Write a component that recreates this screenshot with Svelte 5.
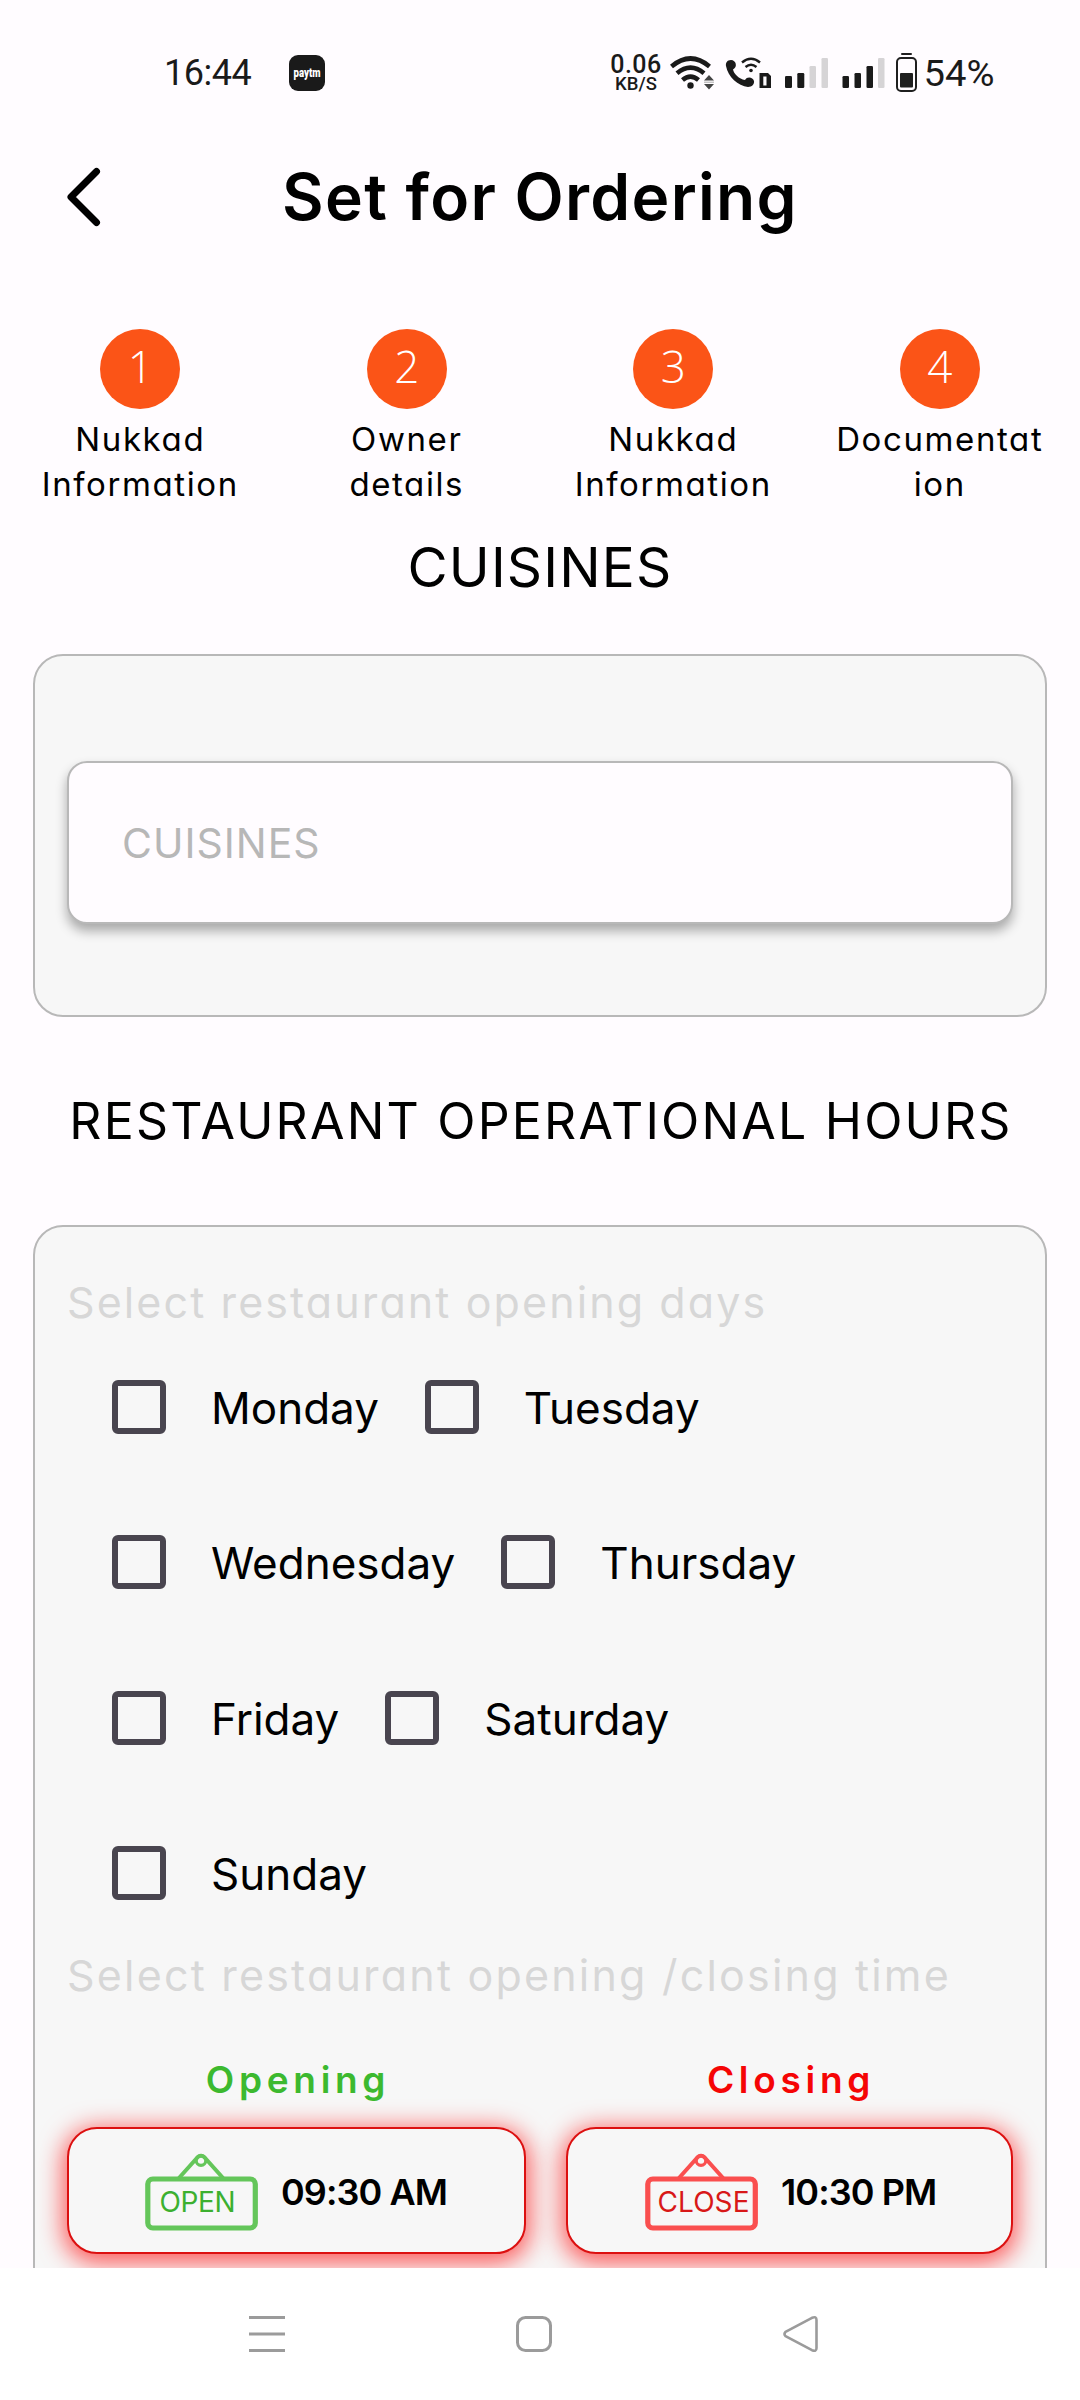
<script>
  const steps = [
    { n: 1, lines: ['Nukkad', 'Information'] },
    { n: 2, lines: ['Owner', 'details'] },
    { n: 3, lines: ['Nukkad', 'Information'] },
    { n: 4, lines: ['Documentat', 'ion'] }
  ];
  const dayRows = [['Monday', 'Tuesday'], ['Wednesday', 'Thursday'], ['Friday', 'Saturday'], ['Sunday']];
  const slots = [
    { kind: 'open', title: 'Opening', sign: 'OPEN', x: 14.5, len: 76, time: '09:30 AM' },
    { kind: 'close', title: 'Closing', sign: 'CLOSE', x: 12.5, len: 92, time: '10:30 PM' }
  ];
</script>

<div class="screen">
  <div class="status">
    <span class="clock">16:44</span>
    <span class="paytm"><svg width="36" height="36"><text x="4.5" y="22" textLength="27" lengthAdjust="spacingAndGlyphs">paytm</text></svg></span>
    <div class="speed"><span class="rate">0.06</span><span class="unit">KB/S</span></div>
    <svg class="icons" width="310" height="48" viewBox="668 48 310 48">
      <g fill="none" stroke="#1a1a1a">
        <path d="M671.5 65.5Q690.5 49.5 709.5 65.5" stroke-width="4.6" />
        <path d="M677 72.3Q690.5 61 704 72.3" stroke-width="4.6" />
        <path d="M682.5 79Q690.5 72.3 698.5 79" stroke-width="4.6" />
      </g>
      <circle cx="690.5" cy="84.5" r="3.2" fill="#1a1a1a" />
      <path d="M704 79.5L709 74L714 79.5ZM704 83L709 88.5L714 83Z" fill="#444" />
      <path d="M704 81.2H714" stroke="#aaa" stroke-width="1" />
      <path d="M731 59C727 59 725.5 62 726 65C728 76 738 85 748 86C752 86 754.5 83 754 80C753 76 747 75 745 79C739 78 734 73 733 68.500C738 66 736 59 731 59Z" fill="#1a1a1a" />
      <g fill="none" stroke="#1a1a1a" stroke-width="2.4">
        <path d="M742 61.500Q751 54 760 61.500" />
        <path d="M745.500 66Q751 61.500 756.500 66" />
      </g>
      <circle cx="751" cy="69.500" r="1.8" fill="#1a1a1a" />
      <path fill-rule="evenodd" d="M759.500 72H768L771 75V87H759.500ZM763.300 75.500V84.500H766.500V75.500Z" fill="#1a1a1a" />
      <g fill="#1a1a1a">
        <rect x="785" y="75" width="7" height="12" rx="1.300" /><rect x="797.300" y="72" width="7" height="15" rx="1.300" />
        <rect x="842.500" y="75" width="6.500" height="12" rx="1.300" /><rect x="854.500" y="72" width="6.500" height="15" rx="1.300" /><rect x="866.500" y="65" width="6.500" height="22" rx="1.300" />
      </g>
      <g fill="#d6d4d6">
        <rect x="809.500" y="65" width="6.500" height="22" rx="1.300" /><rect x="821.500" y="57" width="6.500" height="30" rx="1.300" /><rect x="878" y="57" width="6.500" height="30" rx="1.300" />
      </g>
      <rect x="897" y="57" width="19" height="33" rx="4" fill="none" stroke="#1f1f1f" stroke-width="2" />
      <rect x="901" y="52" width="11" height="2" rx="1" fill="#1f1f1f" />
      <rect x="900" y="72" width="13" height="14.500" rx="1" fill="#1f1f1f" />
      <text class="pct" x="923.500" y="85" textLength="71" lengthAdjust="spacingAndGlyphs">54%</text>
    </svg>
  </div>

  <header>
    <svg class="back" width="40" height="64" viewBox="0 0 40 64" fill="none" stroke="#000" stroke-width="7" stroke-linecap="round" stroke-linejoin="round"><path d="M32.500 6.500L7 32L32.500 57.500" /></svg>
    <h1>Set for Ordering</h1>
  </header>

  <ol class="steps">
    {#each steps as s}
      <li>
        <span class="dot">{s.n}</span>
        {#each s.lines as line}<span class="step-label geo">{line}</span>{/each}
      </li>
    {/each}
  </ol>

  <h2 class="cuisines">CUISINES</h2>
  <section class="card cuisine-card">
    <div class="field geo">CUISINES</div>
  </section>

  <h2 class="hours">RESTAURANT OPERATIONAL HOURS</h2>
  <section class="card hours-card">
    <p class="hint geo first">Select restaurant opening days</p>
    {#each dayRows as row}
      <div class="days">
        {#each row as day}
          <label class="day"><span class="box"></span><span>{day}</span></label>
        {/each}
      </div>
    {/each}
    <p class="hint geo">Select restaurant opening /closing time</p>
    <div class="slots">
      {#each slots as s}
        <div class="slot {s.kind}">
          <div class="slot-title geo">{s.title}</div>
          <div class="time-button">
            <svg class="sign" width="113" height="80" viewBox="0 0 113 80">
              <g class="frame" fill="none" stroke-width="5.200">
                <rect x="2.800" y="28" width="107.500" height="49" rx="5" />
                <path d="M34 27L51 8Q56 1.500 61 8L78 27" stroke-width="4" />
                <circle cx="56" cy="9.500" r="4.800" stroke-width="3.200" />
              </g>
              <text x={s.x} y="61" textLength={s.len}>{s.sign}</text>
            </svg>
            <span class="time">{s.time}</span>
          </div>
        </div>
      {/each}
    </div>
  </section>

  <nav>
    <svg width="36" height="38" viewBox="0 0 36 38" stroke="#9b9b9b" stroke-width="3"><path d="M0 2.500H36M0 19H36M0 35.500H36" /></svg>
    <svg width="36" height="38" viewBox="0 0 36 38" fill="none" stroke="#9b9b9b" stroke-width="3"><rect x="1.500" y="2.500" width="33" height="33" rx="8" /></svg>
    <svg width="36" height="38" viewBox="0 0 36 38" fill="none" stroke="#9b9b9b" stroke-width="2.600" stroke-linejoin="round"><path d="M2.500 16.800L29 2.800Q33.500 1 33.500 5V33Q33.500 37 29 35.200L2.500 21.200Q0.500 19 2.500 16.800Z" /></svg>
  </nav>
</div>

<style>
  :global(body) { margin: 0; background: #fffcff; }
  .screen {
    width: 1080px; height: 2400px; overflow: hidden;
    display: flex; flex-direction: column;
    background: #fffcff; color: #000;
    font-family: Inter, 'Liberation Sans', sans-serif;
    white-space: nowrap;
  }
  .geo, h1 { font-feature-settings: 'cv11'; }
  h1, h2, p, ol { margin: 0; padding: 0; font-weight: 400; }

  .status { height: 145px; flex: none; display: flex; align-items: center; color: #1a1a1a; font-family: Roboto, sans-serif; }
  .clock { width: 125px; margin-left: 164px; font-size: 36px; letter-spacing: -0.500px; }
  .paytm { width: 36px; height: 36px; border-radius: 9px; background: #1a1a1a; }
  .paytm svg { display: block; overflow: visible; }
  .paytm text { font: 900 12px Roboto, sans-serif; fill: #fff; }
  .speed { width: 60px; margin: 4px 0 0 281px; display: flex; flex-direction: column; align-items: center; }
  .rate { font-size: 25px; line-height: 20px; font-weight: 500; letter-spacing: 0.500px; }
  .unit { font-size: 18.500px; line-height: 19px; font-weight: 500; }
  .icons { margin-left: 2px; overflow: visible; }
  .pct { font: 400 36.500px Roboto, sans-serif; fill: #1a1a1a; }

  header { height: 104px; flex: none; display: grid; grid-template-columns: 104px 872px 104px; align-items: center; }
  .back { margin-left: 64px; }
  h1 { padding-bottom: 2px; text-align: center; font-size: 64px; font-weight: 600; letter-spacing: 1.300px; }

  .steps { list-style: none; display: grid; grid-template-columns: repeat(4, 266.500px); margin: 80px 7px 0; flex: none; }
  li { display: flex; flex-direction: column; align-items: center; }
  .dot { width: 80px; height: 80px; border-radius: 50%; margin-bottom: 8px; background: #fb5417; color: #fff; font: 300 44px/75px 'Open Sans', sans-serif; text-align: center; }
  .step-label { height: 45px; line-height: 45px; font-size: 33px; letter-spacing: 1.600px; }

  h2 { text-align: center; flex: none; }
  .cuisines { height: 120px; line-height: 120px; font-size: 55px; letter-spacing: 1.150px; }
  .hours { height: 208px; line-height: 208px; padding-left: 2px; font-size: 50px; letter-spacing: 2.200px; }

  .card { box-sizing: border-box; margin: 0 33px; border: 2px solid #b8b8b8; border-radius: 30px; background: #f7f7f7; }
  .cuisine-card { height: 363px; flex: none; margin-top: 27px; padding: 105px 32px 0; }
  .field {
    box-sizing: border-box; height: 163px; padding-left: 53px;
    border: 2px solid #b8b8b8; border-radius: 20px; background: #fffcff;
    box-shadow: 0 7px 12px rgba(0, 0, 0, 0.32);
    color: #b7b7b7; font-size: 41px; line-height: 160px; letter-spacing: 1px;
  }
  .hours-card { height: 1120px; flex: none; padding: 50px 32px 0; }
  .hint { height: 50px; line-height: 48px; color: #d7d7d7; font-size: 43px; letter-spacing: 2.200px; }
  .hint.first { height: 52px; line-height: 51px; letter-spacing: 2.100px; }
  .days { height: 155.500px; padding-left: 45px; display: flex; align-items: center; gap: 46px; }
  .day { display: flex; align-items: center; gap: 45px; font-size: 44px; letter-spacing: 0; }
  .day span:last-child { padding-top: 2px; }
  .box { box-sizing: border-box; width: 54px; height: 54px; border: 6px solid #49454f; border-radius: 6px; }

  .slots { display: grid; grid-template-columns: 459px 447px; column-gap: 40px; padding-top: 55px; }
  .slot-title { height: 48px; line-height: 48px; margin-bottom: 23px; padding-left: 3px; text-align: center; font-size: 37px; font-weight: 600; letter-spacing: 4.700px; }
  .time-button {
    box-sizing: border-box; height: 127px; padding-left: 76px;
    display: flex; align-items: center; gap: 23px;
    border: 2px solid #dc1010; border-radius: 30px; background: #f7f7f7;
    box-shadow: 0 5px 25px 4px rgba(255, 0, 0, 0.64);
  }
  .close .time-button { padding-left: 77px; }
  .time { padding-top: 2px; font-size: 36px; font-weight: 600; letter-spacing: -0.900px; }
  .sign text { font: 400 28px Inter, sans-serif; }
  .frame { opacity: 0.78; }
  .open .slot-title { color: #3cb92f; }
  .open .frame { stroke: #3cb92f; }
  .open text { fill: #3cb02f; }
  .close .slot-title { color: #f50505; }
  .close .frame { stroke: #fb2020; }
  .close text { fill: #d81818; }

  nav { position: absolute; left: 0; top: 2268px; box-sizing: border-box; width: 1080px; height: 132px; padding: 0 261px 0 249px; display: flex; align-items: center; justify-content: space-between; background: #fff; }
</style>
